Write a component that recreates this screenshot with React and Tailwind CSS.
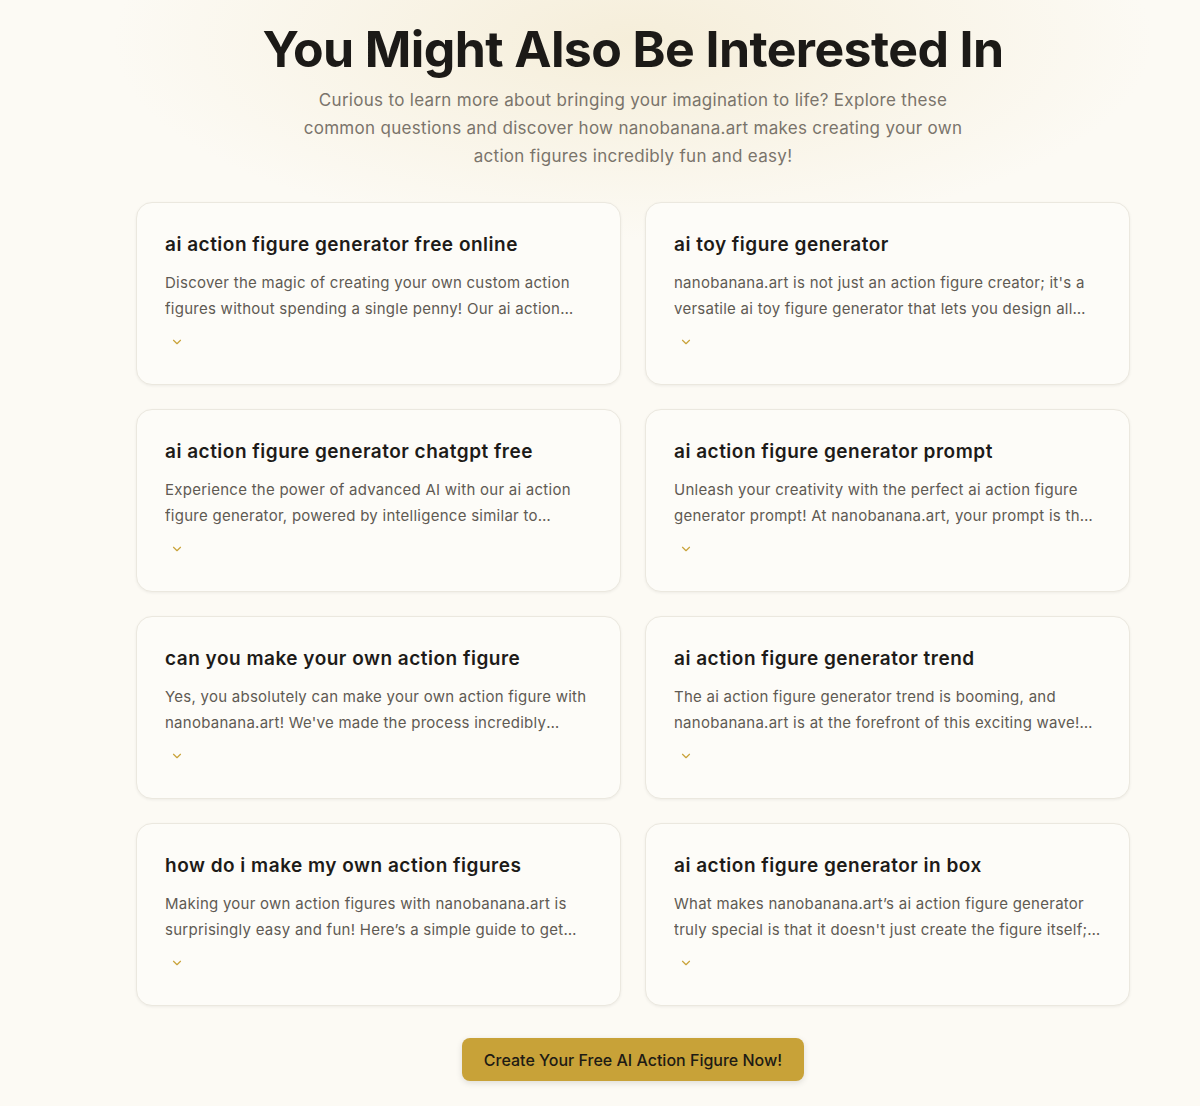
import React from "react";
import { ChevronDown } from "lucide-react";

const items = [
  ["ai action figure generator free online", "Discover the magic of creating your own custom action figures without spending a single penny! Our ai action figure generator free online tool lets you design amazing figures."],
  ["ai toy figure generator", "nanobanana.art is not just an action figure creator; it's a versatile ai toy figure generator that lets you design all kinds of collectible toys."],
  ["ai action figure generator chatgpt free", "Experience the power of advanced AI with our ai action figure generator, powered by intelligence similar to ChatGPT, completely free."],
  ["ai action figure generator prompt", "Unleash your creativity with the perfect ai action figure generator prompt! At nanobanana.art, your prompt is the key to everything."],
  ["can you make your own action figure", "Yes, you absolutely can make your own action figure with nanobanana.art! We've made the process incredibly simple and fun."],
  ["ai action figure generator trend", "The ai action figure generator trend is booming, and nanobanana.art is at the forefront of this exciting wave! Join thousands of creators."],
  ["how do i make my own action figures", "Making your own action figures with nanobanana.art is surprisingly easy and fun! Here’s a simple guide to get you started right away."],
  ["ai action figure generator in box", "What makes nanobanana.art’s ai action figure generator truly special is that it doesn't just create the figure itself; it also designs the box."],
];

export default function App() {
  return (
    <div
      className="min-h-[1106px] w-full bg-[#fcfaf4]"
      style={{
        fontFamily: "Inter, 'Noto Sans', sans-serif",
        backgroundImage:
          "radial-gradient(ellipse 520px 200px at 633px 40px, rgba(240,228,196,0.55), rgba(252,250,244,0) 100%)",
      }}
    >
      <div className="ml-[136px] w-[994px] pt-[24px] pb-6 flex flex-col items-center">
        <h1 className="text-[50px] leading-[50px] font-bold tracking-[-0.6px] text-[#1c1a17] text-center">
          You Might Also Be Interested In
        </h1>
        <p className="mt-[12px] max-w-[680px] text-center text-[17px] leading-[28px] tracking-[0.3px] text-[#7a746b]">
          Curious to learn more about bringing your imagination to life? Explore these common questions and discover how nanobanana.art makes creating your own action figures incredibly fun and easy!
        </p>
        <div className="mt-8 grid w-full grid-cols-2 gap-x-6 gap-y-6">
          {items.map(([t, d]) => (
            <div
              key={t}
              className="h-[183px] rounded-2xl border border-[#ebe8df] bg-[#fdfcf8] px-7 pt-7 shadow-[0_1px_3px_rgba(0,0,0,0.06)]"
            >
              <h3 className="text-[19px] leading-[28px] font-semibold tracking-[0.5px] text-[#1d1b18]">{t}</h3>
              <p className="mt-[11px] text-[15px] leading-[26px] tracking-[0.26px] text-[#5f5a53] line-clamp-2">{d}</p>
              <div className="mt-3 ml-1 flex h-4 w-4 items-center justify-center">
                <ChevronDown size={14} strokeWidth={2} color="#c9a33a" />
              </div>
            </div>
          ))}
        </div>
        <button className="mt-8 h-[43px] w-[342px] rounded-lg bg-[#c8a238] text-[16px] font-medium text-[#1e1b14] shadow-[0_2px_6px_rgba(0,0,0,0.12)]">
          Create Your Free AI Action Figure Now!
        </button>
      </div>
    </div>
  );
}
